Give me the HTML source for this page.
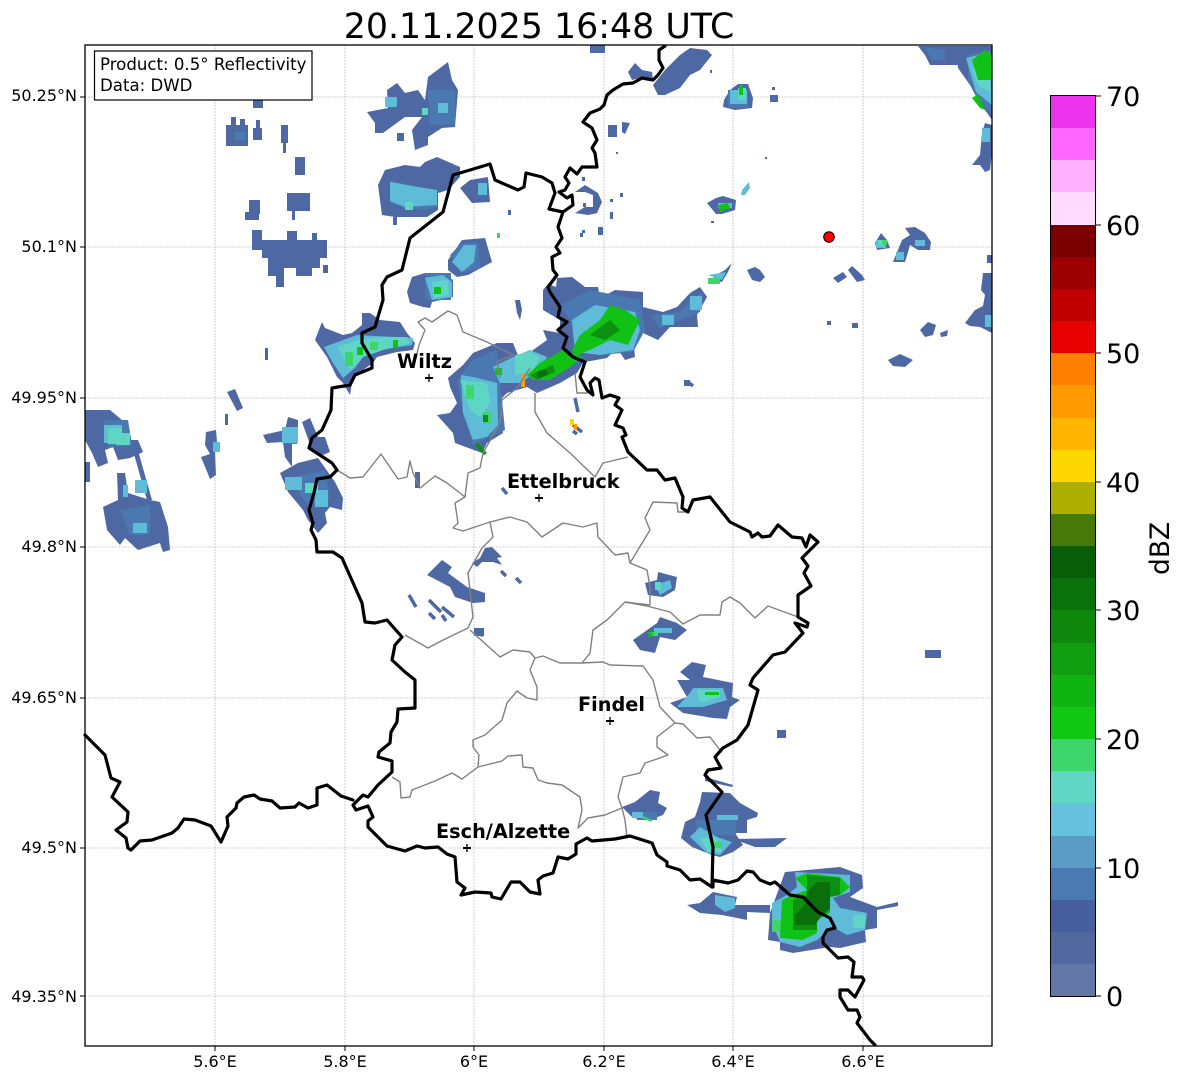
<!DOCTYPE html>
<html><head><meta charset="utf-8"><style>html,body{margin:0;padding:0;background:#fff;width:1184px;height:1081px;overflow:hidden}svg{display:block}text{font-family:"DejaVu Sans","Liberation Sans",sans-serif;fill:#000}</style></head><body>
<svg width="1184" height="1081" viewBox="0 0 1184 1081" xmlns="http://www.w3.org/2000/svg">
<rect width="1184" height="1081" fill="#fff"/>
<text x="539" y="38" font-size="34.8" text-anchor="middle">20.11.2025 16:48 UTC</text>
<g stroke="#c4c4c4" stroke-width=".8" stroke-dasharray="2 1" fill="none">
<path d="M215 45V1046M345 45V1046M474 45V1046M604 45V1046M733 45V1046M863 45V1046M85 97H992M85 247H992M85 398H992M85 547H992M85 698H992M85 848H992M85 996H992"/></g>

<path fill="#f0f1f6" d="M248 76h13v11h4v13h-15z"/>
<!-- base -->
<path fill="#4e68a4" d="M226 125h22v21h-22zM231 117h5v8h-5zM240 119h5v6h-5zM253 128h9v12h-9zM256 120h4v8h-4zM281 125h7v18h-7zM283 143h3v10h-3zM295 157h10v18h-10zM253 100h10v8h-10zM245 212h14v8h-14zM249 200h11v14h-11zM287 193h23v18h-23zM292 211h3v9h-3zM252 230h10v20h-10zM262 240h65v18h-65zM275 258h45v10h-45zM268 258h10v18h-10zM276 268h8v19h-8zM287 231h10v10h-10zM312 233h5v8h-5zM323 265h5v8h-5zM296 268h16v8h-16zM265 348h3v12h-3z
M367 112L388 108L387 90L397 83L405 93L418 90L425 100L428 77L448 62L452 80L458 90L455 127L442 128L428 137L428 145L415 150L412 130L422 117L405 117L383 133L375 133L375 123zM397 133h7v8h-7z
M378 185L385 170L405 165L420 167L425 162L437 157L460 167L460 177L448 190L438 193L438 210L427 217L395 217L382 215zM393 217h4v8h-4zM460 188L470 180L488 177L490 202L472 203z
M407 292L412 277L425 273L443 273L453 280L453 297L432 302L430 308L423 307L410 303zM448 260L462 240L485 238L492 262L468 275L457 277L448 270zM508 210h3v5h-3z
M315 340L322 322L325 328L343 335L352 333L362 325L362 313L370 313L380 320L400 322L407 333L415 343L413 350L397 352L377 357L373 363L353 377L350 395L343 383L337 377L327 357z
M227 392L235 389L243 408L237 411zM225 414h3v11h-3zM206 432L216 430L217 442L220 452L215 452L216 475L210 479L201 457L210 454L205 445z
M263 435L285 430L288 417L298 420L298 443L292 443L292 467L285 457L283 442L267 443zM302 422L310 418L318 437L325 437L330 452L323 455L312 450zM280 473L298 463L318 458L335 482L343 498L342 510L330 507L325 513L327 523L318 533L308 520L303 510L288 492z
M85 410L110 410L122 420L130 440L138 440L143 452L130 458L118 460L113 447L105 450L108 463L98 467L92 453L85 440zM85 462h5v20h-5zM130 440L135 440L152 500L147 500z
M117 473L125 473L128 493L150 500L160 502L168 527L170 550L163 552L160 543L138 550L125 538L120 545L107 530L103 507L118 500z
M427 575L442 560L452 567L448 573L467 587L485 593L485 602L473 603L455 597L450 587zM472 563L480 558L485 548L492 547L502 557L497 558L502 565L493 562L482 562L477 567zM474 628h10v8h-10z
M415 472h5v16h-5zM684 380h6v6h-6zM515 300L520 300L522 310L520 320L517 313z
M448 378L463 365L473 353L497 343L513 343L520 360L533 350L547 340L543 330L560 333L583 363L577 373L560 383L537 393L527 387L507 393L500 400L503 433L487 443L482 453L455 443L453 433L437 415L450 413L457 403L450 387z
M543 290L548 284L556 287L557 278L572 277L585 287L598 287L600 298L615 290L643 292L643 307L663 312L677 307L690 293L700 287L707 297L697 315L698 327L683 327L670 327L658 340L643 333L633 335L635 357L625 360L617 348L607 358L585 362L572 355L560 335L560 320L543 310z
M628 72L635 63L642 70L652 72L653 80L640 78L632 80zM653 85L665 70L680 55L690 48L707 50L712 55L700 70L690 75L680 88L665 95L658 95zM590 45h15v8h-15zM608 125h9v12h-9zM622 122L630 123L625 134L622 132zM710 70h2v3h-2z
M770 95h8v7h-8zM772 87h3v3h-3zM765 157h2v2h-2zM616 152h2v2h-2z
M918 46L958 46L957 50L960 65L945 65L930 65L925 55zM957 46L992 46L992 120L985 110L978 100L970 85L958 68zM972 165L980 155L982 133L985 123L992 125L992 153L990 170L985 172L980 165z
M724 100L730 90L738 84L748 84L753 98L752 108L735 110L723 107zM707 203L716 198L723 196L736 200L735 210L722 214L716 214zM711 221h3v2h-3z
M875 243L881 233L887 240L890 248L877 250zM902 240L910 235L905 228L915 227L925 233L931 242L930 250L918 250L910 245L908 252L905 262L893 262L898 250z
M716 275L725 270L732 263L728 272L722 282L712 280zM747 270L755 267L760 270L765 277L760 282L752 280zM833 278L843 272L847 277L838 283zM848 270L852 266L862 275L865 280L857 282zM827 321h4v4h-4zM852 323h6v5h-6zM888 360L900 354L913 360L905 367L893 366zM920 330L928 322L936 325L933 335L925 337zM940 333L948 330L947 336L941 337z
M965 323L975 310L983 306L985 295L981 290L983 273L992 273L992 333L980 327L970 326zM987 255h5v8h-5z
M575 192L585 185L598 193L602 202L597 213L603 212L588 215L575 213L585 207L593 207L593 195L585 192zM582 177h3v4h-3zM620 193h3v4h-3zM610 199h3v3h-3zM610 212h3v7h-3zM582 230h3v3h-3zM580 233h3v4h-3zM598 227h5v8h-5zM583 203h3v4h-3z
M645 583L657 580L658 572L677 577L675 590L663 597L648 595zM633 640L643 633L657 623L660 617L677 623L687 630L675 640L660 637L655 653L640 650z
M670 703L687 697L677 680L690 680L680 672L692 662L706 665L703 677L733 683L732 697L740 700L730 707L727 719L713 718L683 713zM777 730h9v8h-9zM925 650h16v8h-16z
M622 807L635 802L650 790L660 792L658 803L667 808L663 815L650 820L633 818z
M705 777L733 785L732 787L705 781zM681 838L685 822L695 817L700 802L702 792L730 793L740 803L758 813L757 817L747 820L747 833L735 833L743 845L733 852L720 857L712 855L692 847zM733 839L787 838L775 847L755 847z
M687 905L700 903L713 892L737 897L735 905L770 905L770 913L747 912L747 920L722 915L700 913z
M785 872L840 867L862 875L863 888L850 897L877 907L898 902L898 906L877 910L877 928L865 930L866 942L840 948L830 947L793 953L780 950L780 942L768 940L770 913z"/>
<g fill="none" stroke="#4e68a4" stroke-width="3.5"><path d="M502 488l5 6M501 571l5 5M516 578l5 5M409 595l7 12M575 398l3 14M573 425l9 7M573 431l4 3M688 382l5 4M429 600l12 12M442 607l12 10M429 613l6 6M442 615l4 6M477 630l6 6"/></g>
<!-- mid blue -->
<path fill="#4a79b2" d="M428 90L455 90L455 125L430 125zM390 180L418 187L437 190L437 207L425 210L405 208L390 203zM235 131h10v10h-10zM425 273h26v27h-26zM450 255L462 243L478 242L480 268L465 272zM457 380L473 360L497 350L505 430L473 445L463 413zM560 305L590 290L640 300L645 330L633 352L600 355L575 350L570 320zM650 315L680 312L690 300L702 292L700 312L680 320L660 328zM968 55L990 50L992 115L980 100L968 80zM925 47L945 50L945 60L932 60zM103 420L128 420L132 445L108 448zM120 510L150 505L150 535L130 535zM288 478L325 470L330 500L308 505zM696 820L736 818L736 835L696 835zM285 430h12v14h-12zM728 90h20v18h-20zM637 812h20v8h-20z"/>
<!-- cyan -->
<path fill="#5fbcd8" d="M324 347L357 335L413 338L412 345L367 352L355 368L343 378L333 363zM390 182L418 187L437 190L437 205L405 207L390 201zM478 183h9v12h-9zM438 103h10v10h-10zM385 97h12v10h-12zM425 278L443 275L452 282L452 297L432 300zM452 262L464 245L476 245L474 262L462 272zM461 375L473 377L497 383L498 425L487 437L473 440L463 413zM493 367L513 357L530 350L547 357L540 370L520 383L500 383zM572 320L595 305L635 312L640 330L633 350L600 355L575 352zM662 315h12v10h-12zM690 296h12v14h-12zM730 90h17v14h-17zM718 203h14v5h-14zM966 58L990 52L992 105L976 92zM982 128h8v14h-8zM985 315h7v12h-7zM876 240h10v8h-10zM915 240h10v6h-10zM896 252h8v8h-8zM742 190L749 182L750 188L745 195L741 195zM708 275l18-3l-4 8zM104 425h18v18h-18zM133 523h14v10h-14zM135 480h12v13h-12zM285 477h17v13h-17zM315 490h13v17h-13zM213 442h7v10h-7zM282 427h16v16h-16zM123 485h5v12h-5zM655 585L670 580L672 588L660 595zM677 707L690 693L693 688L723 688L727 700L703 707zM654 628h18v5h-18zM632 812h11v6h-11zM690 837L700 827L717 837L732 842L720 855L707 853zM717 815h21v5h-21zM715 895L735 898L735 908L725 912L715 905zM795 872L850 875L850 892L833 898L840 908L867 913L865 930L847 935L833 927L817 940L800 947L780 942L772 923L772 903L787 895L797 887z"/>
<!-- teal -->
<path fill="#5fd6c4" d="M337 347L358 340L383 337L407 337L410 343L383 350L363 357L350 370L343 357zM405 202h8v8h-8zM422 108h6v7h-6zM432 282L448 280L449 295L434 298zM460 380L487 383L490 403L480 417L470 410zM515 355L530 352L540 358L532 372L515 375zM738 88h8v12h-8zM972 68L990 62L990 92L978 85zM878 240h6v6h-6zM108 428h14v16h-14zM116 433h14v12h-14zM305 483h13v10h-13zM697 690h23v7l-20 6zM700 838L717 837L722 852L708 852zM655 582h6v8h-6zM853 915h12v13h-12z"/>
<!-- light green -->
<path fill="#3dd66c" d="M345 352h8v14h-8zM370 342h8v8h-8zM466 385h8v14h-8zM483 412h8v12h-8zM540 362h10v10h-10zM708 278h12v6h-12zM882 240h5v5h-5zM643 816l9 4l-1 2l-9-4zM650 632h8v4h-8zM713 842h9v6h-9zM497 233h3v5h-3zM772 920h10v12h-10z"/>
<!-- green -->
<path fill="#10c216" d="M357 347h6v8h-6zM393 340h5v8h-5zM434 287h7v7h-7zM495 368h7v7h-7zM572 350L580 335L600 320L610 305L625 310L640 320L635 330L628 345L610 340L590 350L575 356zM527 375L540 363L563 350L583 357L570 367L550 380L533 380zM972 60L985 50L992 55L992 80L978 80zM972 98L978 94L985 110L980 108zM718 205L728 203L730 208L720 212zM739 85h4v10h-4zM795 878L807 873L840 877L850 887L840 895L830 897L830 913L817 920L817 933L803 940L780 938L782 900L793 895L807 890zM705 692h14v3h-14zM647 632L654 633L650 638z"/>
<path fill="#0d8f0f" d="M590 335L610 320L620 330L605 340zM530 375L553 365L555 372L537 380zM807 875L840 878L840 895L830 897L830 910L817 920L817 930L793 930L793 900L807 895zM483 415h5v7h-5zM477 442L487 453L484 455L475 445z"/>
<path fill="#0a6f0a" d="M817 882L830 882L830 908L822 915L815 925L795 925L795 915L805 905L807 892zM536 372l10-3l2 5l-9 4z"/>
<path fill="#ff9a00" d="M521 373h4v14h-4zM570 420h3v4h-3zM574 424h3v6h-3z"/>
<path fill="#ffd700" d="M570 419h4v6h-4z"/>

<!-- cantons -->
<g fill="none" stroke="#808080" stroke-width="1.4" stroke-linejoin="round">
<path d="M337 470L350 478L363 477L381 454L398 479L407 477L410 461L413 473L420 488L435 476L447 483L465 497L455 503L458 523L453 528L463 531L490 522L510 517L527 522L542 537L563 523L583 527L597 523L598 537L615 555L628 553L630 563L647 570L650 587L650 605L625 602L607 620L593 630L590 653L582 663"/>
<path d="M425 330L418 322L425 318L432 322L448 311L457 315L463 332L487 342L513 355L497 362L500 378M425 330L419 345L416 358"/>
<path d="M465 497L468 473L480 468L483 453L500 423L502 400L517 388L530 368M535 393L535 412L547 433L570 453L595 477L603 463L628 457M575 373L577 393L588 393"/>
<path d="M490 522L493 537L482 548L468 573L473 617L468 628L443 640L428 648L405 635"/>
<path d="M630 563L650 530L645 518L653 502L677 503L678 512L687 512"/>
<path d="M625 602L647 606L670 612L683 624L700 615L720 615L722 602L730 597L740 603L755 618L768 606L798 617"/>
<path d="M470 630L500 657L513 650L530 652L535 658L543 656L560 663L582 663L603 662L610 665L643 666L653 680L660 707L675 723L683 724L697 738L710 737L720 750"/>
<path d="M535 658L530 670L537 687L537 700L527 698L517 691L507 703L502 720L485 735L473 740L473 747L479 755L478 767"/>
<path d="M392 777L400 782L401 798L410 797L412 790L435 781L452 773L462 779L478 767L502 761L508 756L522 755L523 767L533 768L538 780L547 783L562 785L580 797L582 810L578 828L588 818L605 815L622 808L625 820L627 837M622 808L618 797L623 777L640 773L645 763L657 759L668 755L657 747L657 737L675 723"/>
</g>

<!-- borders -->
<g fill="none" stroke="#000" stroke-width="3.2" stroke-linejoin="round" stroke-linecap="round">
<path d="M665 46L659 50L659 60L663 68L658 75L653 80L642 78L633 83L623 84L613 90L607 95L604 105L600 109L590 113L583 122L592 128L597 140L592 148L595 153L597 167L582 167L577 174L570 168L565 177L569 183L565 190L559 192L567 198L572 195L573 205L563 212L549 209L555 193L552 183L542 177L526 173L524 187L518 190L495 180L490 164L470 170L453 175L443 212L410 238L402 270L387 277L382 285L383 300L375 327L362 333L362 343L372 360L372 368L355 375L350 385L332 388L331 410L322 430L312 438L309 448L332 463L337 470L330 477L317 479L314 493L309 510L313 523L311 530L316 540L317 552L333 552L342 558L362 603L365 622L375 623L387 620L402 637L395 645L392 660L405 672L415 680L415 708L398 709L397 722L391 732L390 743L379 752L378 757L392 761L392 772L378 785L368 797L363 795L353 805L356 810L368 806L373 817L368 821L368 827L387 846L405 851L417 846L425 848L438 847L447 854L455 857L457 882L465 888L461 895L475 892L491 893L492 897L501 899L511 882L520 882L530 892L540 894L538 880L543 876L553 873L558 857L568 859L576 854L576 844L587 838L592 841L615 839L630 836L652 843L657 855L667 862L667 866L680 870L690 880L700 879L712 887L713 847L706 815L722 792L705 775L708 770L721 768L715 757L723 748L737 740L748 725L758 690L750 685L753 678L773 655L785 652L803 633L795 623L807 627L808 623L798 617L798 595L811 586L804 573L808 566L802 558L818 542L810 535L806 547L802 538L792 537L778 525L770 536L762 537L758 533L752 537L750 532L730 522L710 497L693 500L688 512L682 508L683 497L675 478L665 480L657 470L647 470L628 452L622 437L626 435L623 428L615 425L622 410L615 405L619 398L610 395L602 398L599 380L595 378L590 383L593 395L587 390L580 377L585 362L573 357L563 348L567 337L558 330L567 322L558 317L560 307L550 292L548 287L557 275L553 270L552 257L560 253L556 247L562 238L558 227L563 212"/>
<path d="M713 887L713 880L728 883L738 880L747 871L753 872L760 880L770 884L775 882L790 895L803 897L818 912L830 918L835 928L827 930L823 937L823 943L838 958L848 957L854 962L852 977L862 977L864 980L855 997L848 990L840 990L840 997L848 1010L857 1010L860 1017L857 1023L870 1040L875 1045"/>
<path d="M85 735L105 755L111 778L120 782L112 797L128 812L127 822L116 830L126 838L128 848L131 850L140 841L152 840L172 833L178 828L184 819L195 820L211 826L221 842L228 826L227 817L236 808L237 803L244 797L254 795L260 799L272 801L280 808L295 807L299 803L308 808L317 805L317 788L327 785L341 796L353 800"/>
</g>
<!-- city markers -->
<g stroke="#000" fill="none"><path stroke-width="1.3" d="M429 374v8M539 494v8M610 717v8M467 844v8"/><path stroke-width="2" d="M425 378h8M535 498h8M606 721h8M463 848h8"/></g>
<g font-weight="700" font-size="19.3"><text x="397" y="368">Wiltz</text><text x="507" y="488">Ettelbruck</text><text x="578" y="711">Findel</text><text x="436" y="838">Esch/Alzette</text></g>
<circle cx="829" cy="237" r="5.3" fill="#f00" stroke="#000" stroke-width="1"/>
<rect x="85" y="45" width="907" height="1001" fill="none" stroke="#000" stroke-width="1.3"/>
<rect x="94.5" y="51" width="217.5" height="49" fill="#fff" fill-opacity=".95" stroke="#000" stroke-width="1.2"/>
<text x="100" y="70" font-size="16.6">Product: 0.5° Reflectivity</text>
<text x="100" y="91" font-size="16.6">Data: DWD</text>
<!-- ticks -->
<g stroke="#000" stroke-width="1"><path d="M215 1046v5M345 1046v5M474 1046v5M604 1046v5M733 1046v5M863 1046v5M80 97h5M80 247h5M80 398h5M80 547h5M80 698h5M80 848h5M80 996h5"/></g>
<g font-size="16" text-anchor="middle"><text x="215" y="1067">5.6°E</text><text x="345" y="1067">5.8°E</text><text x="474" y="1067">6°E</text><text x="604" y="1067">6.2°E</text><text x="733" y="1067">6.4°E</text><text x="863" y="1067">6.6°E</text></g>
<g font-size="16" text-anchor="end"><text x="77" y="101">50.25°N</text><text x="77" y="252">50.1°N</text><text x="77" y="403">49.95°N</text><text x="77" y="552">49.8°N</text><text x="77" y="703">49.65°N</text><text x="77" y="853">49.5°N</text><text x="77" y="1002">49.35°N</text></g>
<!-- colorbar -->
<g shape-rendering="crispEdges">
<rect x="1051" y="964" width="44" height="32" fill="#6276a8"/><rect x="1051" y="932" width="44" height="32" fill="#51689f"/><rect x="1051" y="900" width="44" height="32" fill="#455f9f"/><rect x="1051" y="868" width="44" height="32" fill="#4b7ab2"/><rect x="1051" y="836" width="44" height="32" fill="#5a9cc5"/><rect x="1051" y="803" width="44" height="33" fill="#66c1de"/><rect x="1051" y="771" width="44" height="32" fill="#60d6c4"/><rect x="1051" y="739" width="44" height="32" fill="#3dd66c"/><rect x="1051" y="707" width="44" height="32" fill="#10c813"/><rect x="1051" y="675" width="44" height="32" fill="#10b412"/><rect x="1051" y="643" width="44" height="32" fill="#109e10"/><rect x="1051" y="610" width="44" height="33" fill="#0d880d"/><rect x="1051" y="578" width="44" height="32" fill="#0a720a"/><rect x="1051" y="546" width="44" height="32" fill="#075e07"/><rect x="1051" y="514" width="44" height="32" fill="#477a08"/><rect x="1051" y="482" width="44" height="32" fill="#aeb000"/><rect x="1051" y="450" width="44" height="32" fill="#ffd700"/><rect x="1051" y="418" width="44" height="32" fill="#ffb400"/><rect x="1051" y="385" width="44" height="33" fill="#ff9a00"/><rect x="1051" y="353" width="44" height="32" fill="#ff8000"/><rect x="1051" y="321" width="44" height="32" fill="#e60000"/><rect x="1051" y="289" width="44" height="32" fill="#c00000"/><rect x="1051" y="257" width="44" height="32" fill="#9c0000"/><rect x="1051" y="225" width="44" height="32" fill="#7d0000"/><rect x="1051" y="192" width="44" height="33" fill="#ffdcff"/><rect x="1051" y="160" width="44" height="32" fill="#ffb0ff"/><rect x="1051" y="128" width="44" height="32" fill="#ff66ff"/><rect x="1051" y="96" width="44" height="32" fill="#ee33ee"/>
</g>
<rect x="1050.5" y="95.5" width="45" height="901" fill="none" stroke="#000" stroke-width="1"/>
<path stroke="#000" stroke-width="1" d="M1095 96h6M1095 225h6M1095 353h6M1095 482h6M1095 610h6M1095 739h6M1095 868h6M1095 996h6"/>
<g font-size="27"><text x="1106" y="106">70</text><text x="1106" y="235">60</text><text x="1106" y="363">50</text><text x="1106" y="492">40</text><text x="1106" y="620">30</text><text x="1106" y="749">20</text><text x="1106" y="878">10</text><text x="1106" y="1006">0</text></g>
<text transform="translate(1169 575) rotate(-90)" font-size="26.5">dBZ</text>
</svg>
</body></html>
